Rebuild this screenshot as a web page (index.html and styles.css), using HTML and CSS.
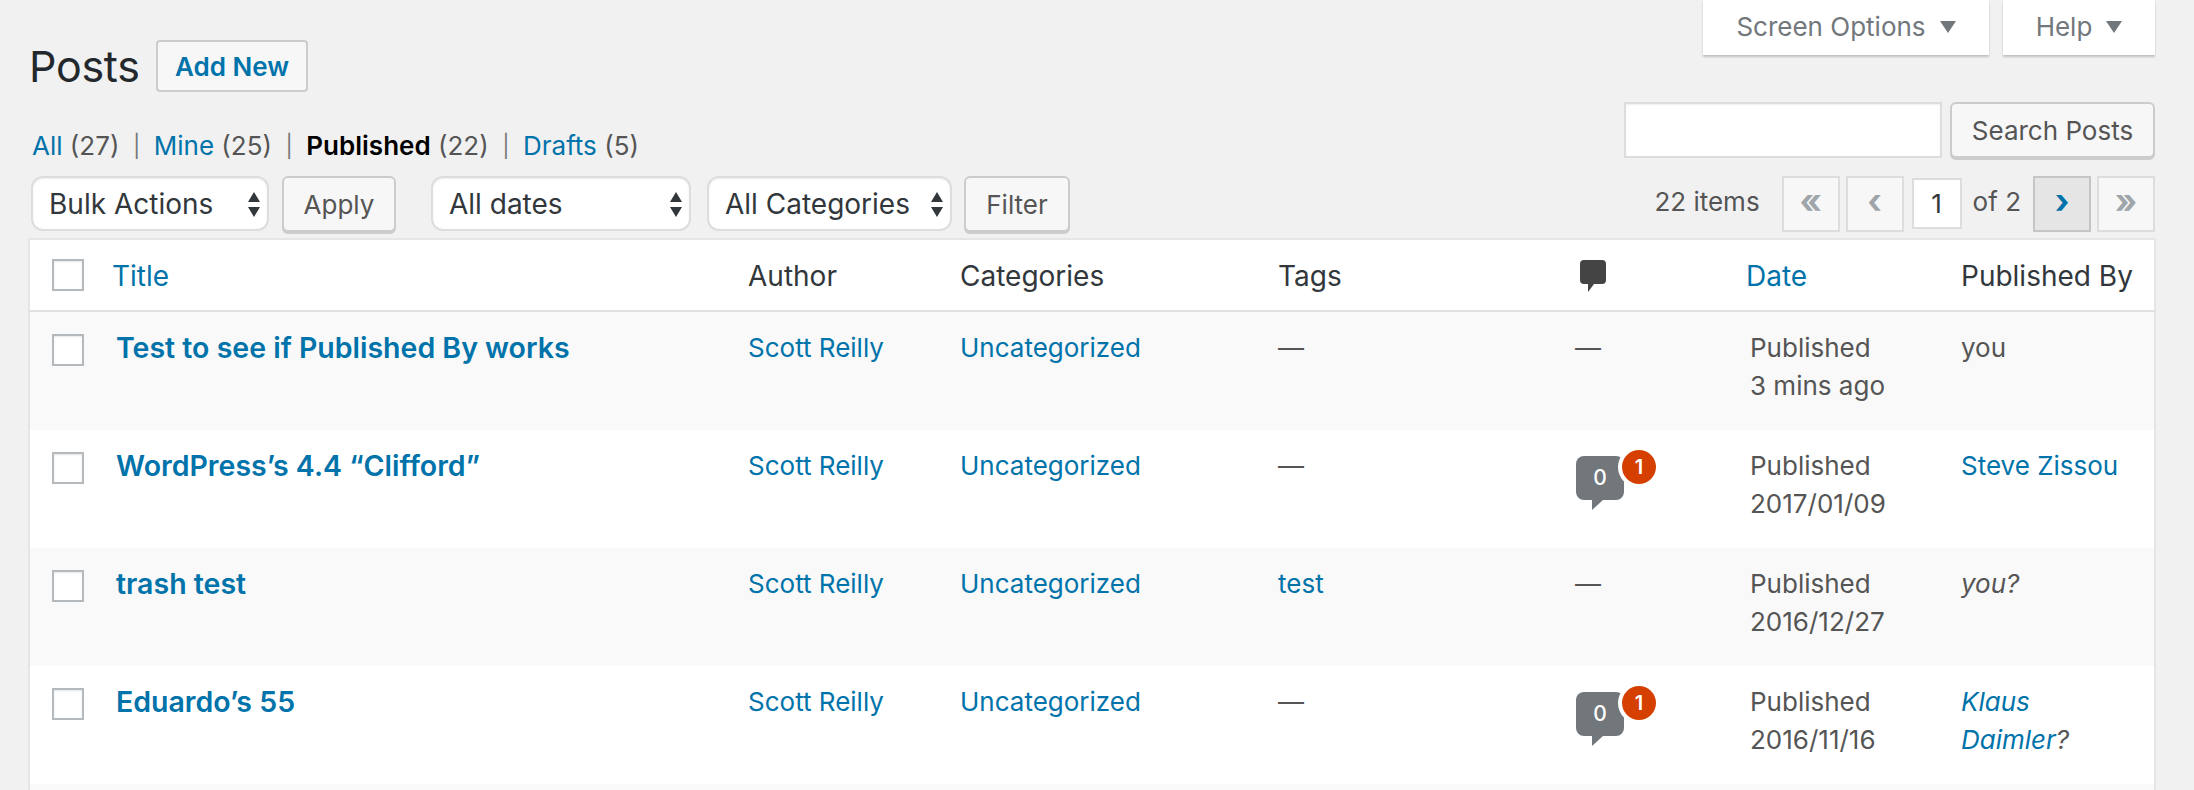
FILE: index.html
```html
<!DOCTYPE html>
<html lang="en">
<head>
  <meta charset="UTF-8">
  <title>Posts</title>
  <link rel="stylesheet" href="styles.css">
</head>
<body>

<div class="wrap">

  <div class="page-head">
    <div class="title-row">
      <h1>Posts</h1>
      <a class="add-new" href="#">Add New</a>
    </div>
    <div class="meta-tabs">
      <button class="meta-tab tab-options">Screen Options <svg width="16" height="12" viewBox="0 0 16 12"><polygon points="0,0 16,0 8,12"/></svg></button>
      <button class="meta-tab tab-help">Help <svg width="16" height="12" viewBox="0 0 16 12"><polygon points="0,0 16,0 8,12"/></svg></button>
    </div>
  </div>

  <div class="filter-band">
    <ul class="subsub">
      <li><a href="#">All</a> (27)</li>
      <li class="sep">|</li>
      <li><a href="#">Mine</a> (25)</li>
      <li class="sep">|</li>
      <li><a class="current" href="#">Published</a> (22)</li>
      <li class="sep">|</li>
      <li><a href="#">Drafts</a> (5)</li>
    </ul>
    <div class="search-box">
      <input class="search-input" type="search">
      <button class="btn btn-search">Search Posts</button>
    </div>
  </div>

  <div class="tablenav">
    <label class="select-wrap w-bulk">
      <select><option>Bulk Actions</option></select>
      <svg width="12" height="25" viewBox="0 0 12 25"><polygon points="6,0 12,10 0,10"/><polygon points="0,15 12,15 6,25"/></svg>
    </label>
    <button class="btn btn-apply">Apply</button>
    <label class="select-wrap w-dates">
      <select><option>All dates</option></select>
      <svg width="12" height="25" viewBox="0 0 12 25"><polygon points="6,0 12,10 0,10"/><polygon points="0,15 12,15 6,25"/></svg>
    </label>
    <label class="select-wrap w-cats">
      <select><option>All Categories</option></select>
      <svg width="12" height="25" viewBox="0 0 12 25"><polygon points="6,0 12,10 0,10"/><polygon points="0,15 12,15 6,25"/></svg>
    </label>
    <button class="btn btn-filter">Filter</button>

    <div class="pagination">
      <span class="item-count">22 items</span>
      <span class="page-btn">«</span>
      <span class="page-btn">‹</span>
      <input class="page-input" type="text" value="1">
      <span class="page-of">of 2</span>
      <a class="page-btn active" href="#">›</a>
      <span class="page-btn">»</span>
    </div>
  </div>

  <table class="posts">
    <colgroup>
      <col class="c-check"><col class="c-title"><col class="c-author"><col class="c-cats">
      <col class="c-tags"><col class="c-comments"><col class="c-date"><col class="c-by">
    </colgroup>
    <thead>
      <tr>
        <th class="check"><input type="checkbox" class="cb"></th>
        <th><a href="#">Title</a></th>
        <th>Author</th>
        <th>Categories</th>
        <th>Tags</th>
        <th>
          <svg class="comment-head" width="26" height="32" viewBox="0 0 26 32"><path d="M4 0h18a4 4 0 0 1 4 4v16a4 4 0 0 1-4 4H14L8 32v-8H4a4 4 0 0 1-4-4V4a4 4 0 0 1 4-4z"/></svg>
        </th>
        <th class="th-date"><a href="#">Date</a></th>
        <th class="th-by">Published By</th>
      </tr>
    </thead>
    <tbody>
      <tr>
        <td class="check"><input type="checkbox" class="cb"></td>
        <td class="title"><a href="#">Test to see if Published By works</a></td>
        <td><a href="#">Scott Reilly</a></td>
        <td><a href="#">Uncategorized</a></td>
        <td>—</td>
        <td>—</td>
        <td>Published<br>3 mins ago</td>
        <td class="by">you</td>
      </tr>
      <tr>
        <td class="check"><input type="checkbox" class="cb"></td>
        <td class="title"><a href="#">WordPress’s 4.4 “Clifford”</a></td>
        <td><a href="#">Scott Reilly</a></td>
        <td><a href="#">Uncategorized</a></td>
        <td>—</td>
        <td><span class="bubble">0<span class="badge">1</span></span></td>
        <td>Published<br>2017/01/09</td>
        <td class="by"><a href="#">Steve Zissou</a></td>
      </tr>
      <tr>
        <td class="check"><input type="checkbox" class="cb"></td>
        <td class="title"><a href="#">trash test</a></td>
        <td><a href="#">Scott Reilly</a></td>
        <td><a href="#">Uncategorized</a></td>
        <td><a href="#">test</a></td>
        <td>—</td>
        <td>Published<br>2016/12/27</td>
        <td class="by"><em>you?</em></td>
      </tr>
      <tr>
        <td class="check"><input type="checkbox" class="cb"></td>
        <td class="title"><a href="#">Eduardo’s 55</a></td>
        <td><a href="#">Scott Reilly</a></td>
        <td><a href="#">Uncategorized</a></td>
        <td>—</td>
        <td><span class="bubble">0<span class="badge">1</span></span></td>
        <td>Published<br>2016/11/16</td>
        <td class="by"><em><a href="#">Klaus Daimler</a>?</em></td>
      </tr>
      <tr class="row-cut">
        <td colspan="8"></td>
      </tr>
    </tbody>
  </table>

</div>

</body>
</html>
```

FILE: styles.css
```css
:root {
  --link: #0073aa;
  --text: #555555;
  --dark: #32373c;
  --line: #e5e5e5;
}
html, body {
  height: 790px;
  overflow: hidden;
}
body {
  margin: 0;
  background: #f1f1f1;
  color: var(--text);
  font-family: Inter, "Noto Sans", sans-serif;
  font-size: 26px;
  line-height: 38px;
}
a {
  color: var(--link);
  text-decoration: none;
}
.wrap {
  padding: 0 38px 0 28px;
}

/* top: title and the two tabs */
.page-head {
  display: flex;
  justify-content: space-between;
  align-items: flex-start;
  height: 92px;
  padding: 0 1px 0 2px;
}
.title-row {
  display: flex;
  align-items: center;
  padding-top: 40px;
}
h1 {
  width: 126px;
  margin: 0 0 0 -1px;
  padding-right: 1px;
  font-size: 43px;
  font-weight: 400;
  line-height: 52px;
  letter-spacing: -0.3px;
  color: #23282d;
}
.add-new {
  width: 152px;
  height: 52px;
  box-sizing: border-box;
  border: 2px solid #ccc;
  border-radius: 4px;
  background: #f7f7f7;
  font-weight: 600;
  line-height: 49px;
  text-align: center;
}
.meta-tabs {
  display: flex;
  gap: 14px;
}
.meta-tab {
  display: flex;
  align-items: center;
  justify-content: center;
  gap: 14px;
  height: 55px;
  border: 0;
  background: #fff;
  box-shadow: 0 2px 2px rgba(0,0,0,0.2);
  color: #72777c;
  font: inherit;
  padding: 0 0 2px;
}
.meta-tab svg {
  fill: #72777c;
}
.tab-options { width: 286px; }
.tab-help { width: 152px; }

/* views and search */
.filter-band {
  display: flex;
  justify-content: space-between;
  align-items: flex-start;
  height: 58px;
  margin-top: 10px;
  padding: 0 1px 0 2px;
}
.subsub {
  display: flex;
  margin: 25px 0 0;
  padding: 0 0 0 2px;
  list-style: none;
}
.sep {
  margin: 0 13.5px;
  color: #777;
  font-size: 22px;
}
.current {
  color: #000;
  font-weight: 600;
}
.search-box {
  display: flex;
  gap: 8px;
  align-items: flex-start;
}
.search-input {
  width: 318px;
  height: 56px;
  box-sizing: border-box;
  border: 2px solid #ddd;
  background: #fff;
  box-shadow: inset 0 1px 2px rgba(0,0,0,0.07);
  outline: 0;
}
.btn {
  height: 56px;
  box-sizing: border-box;
  border: 2px solid #ccc;
  border-radius: 6px;
  background: #f7f7f7;
  box-shadow: 0 2px 0 #ccc;
  color: var(--text);
  font: inherit;
  padding: 2px 0 0;
}
.btn-search { width: 205px; }
.btn-apply { width: 114px; margin-left: 13px; }
.btn-filter { width: 106px; margin-left: 12px; }

/* bulk actions, filters and paging */
.tablenav {
  display: flex;
  align-items: flex-start;
  height: 58px;
  margin: 16px 0 4px;
  padding: 0 1px 0 3px;
}
.select-wrap {
  position: relative;
  display: block;
  height: 55px;
}
.select-wrap select {
  width: 100%;
  height: 100%;
  box-sizing: border-box;
  appearance: none;
  border: 2px solid #ddd;
  border-radius: 12px;
  background: #fff;
  box-shadow: inset 0 1px 2px rgba(0,0,0,0.07);
  color: var(--dark);
  font: inherit;
  font-size: 28px;
  padding: 0 0 0 16px;
  outline: 0;
}
.select-wrap svg {
  position: absolute;
  right: 9px;
  top: 16px;
  fill: var(--dark);
}
.w-bulk { width: 238px; }
.w-dates { width: 260px; margin-left: 35px; }
.w-cats { width: 245px; margin-left: 16px; }
.pagination {
  display: flex;
  align-items: flex-start;
  margin-left: auto;
  gap: 6px;
}
.item-count {
  margin-right: 16px;
  line-height: 52px;
}
.page-btn {
  width: 58px;
  height: 56px;
  box-sizing: border-box;
  border: 2px solid #ddd;
  background: #f7f7f7;
  color: #a0a5aa;
  font-size: 34px;
  font-weight: 700;
  line-height: 46px;
  text-align: center;
}
.page-btn.active {
  border-color: #c5c5c5;
  background: #e5e5e5;
  color: var(--link);
}
.page-input {
  width: 50px;
  height: 51px;
  box-sizing: border-box;
  margin: 2px 0 0 2px;
  border: 2px solid #ddd;
  background: #fff;
  color: var(--dark);
  font: inherit;
  text-align: center;
  padding: 0;
  outline: 0;
}
.page-of {
  margin: 0 6px 0 5px;
  line-height: 52px;
}

/* the list */
.posts {
  width: 2128px;
  table-layout: fixed;
  border: 2px solid var(--line);
  border-bottom: 0;
  border-collapse: separate;
  border-spacing: 0;
  background: #fff;
}
.c-check { width: 75px; }
.c-title { width: 636px; }
.c-author { width: 212px; }
.c-cats { width: 318px; }
.c-tags { width: 297px; }
.c-comments { width: 175px; }
.c-date { width: 211px; }
.c-by { width: 200px; }
.posts th {
  height: 72px;
  box-sizing: border-box;
  padding: 2px 7px 0;
  border-bottom: 2px solid #e1e1e1;
  color: var(--dark);
  font-size: 28px;
  font-weight: 400;
  text-align: left;
  white-space: nowrap;
}
.posts td {
  height: 118px;
  box-sizing: border-box;
  padding: 17px 7px 0;
  vertical-align: top;
}
.posts tbody tr:nth-child(odd) {
  background: #f9f9f9;
}
.posts .row-cut td {
  height: 6px;
  padding: 0;
}
.posts .check {
  padding: 0 0 0 22px;
}
.posts td.check {
  padding-top: 22px;
}
.posts .th-date {
  padding-left: 3px;
}
.posts td.title {
  padding-left: 11px;
  font-size: 28.5px;
  font-weight: 600;
}
.posts td.by {
  padding-right: 30px;
}
.cb {
  display: block;
  width: 32px;
  height: 32px;
  margin: 0;
  box-sizing: border-box;
  appearance: none;
  border: 2px solid #b4b9be;
  background: #fff;
  box-shadow: inset 0 1px 2px rgba(0,0,0,0.1);
}
.comment-head {
  display: block;
  margin: 0 0 0 5px;
  fill: #444;
}

/* comment count */
.bubble {
  position: relative;
  display: block;
  width: 48px;
  height: 44px;
  margin: 9px 0 0 1px;
  border-radius: 8px;
  background: #72777c;
  color: #fff;
  font-size: 21px;
  font-weight: 500;
  line-height: 44px;
  text-align: center;
}
.bubble::after {
  content: "";
  position: absolute;
  left: 16px;
  top: 44px;
  width: 11px;
  height: 10px;
  background: #72777c;
  clip-path: polygon(0 0, 100% 0, 0 100%);
}
.badge {
  position: absolute;
  left: 46px;
  top: -6px;
  width: 34px;
  height: 34px;
  border-radius: 50%;
  background: #d54000;
  box-shadow: 0 0 0 4px #fff;
  font-size: 20px;
  font-weight: 600;
  line-height: 34px;
}
```
